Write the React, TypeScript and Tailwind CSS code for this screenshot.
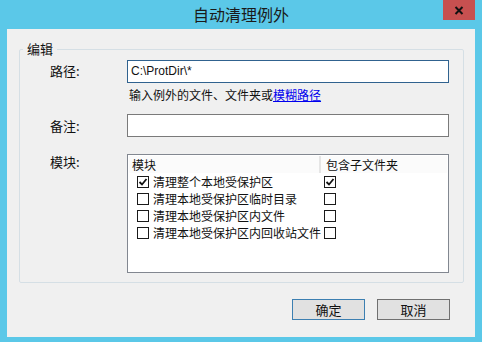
import React from 'react';

const font = { fontFamily: '"Noto Sans CJK SC", "Noto Sans", sans-serif' };

const Check: React.FC<{ on?: boolean }> = ({ on }) => (
  <span className="w-[12px] h-[12px] border border-[#1a1a1a] bg-white flex items-center justify-center shrink-0">
    {on && (
      <svg width="10" height="10" viewBox="0 0 10 10">
        <path d="M1.5 5 L4 7.5 L8.5 2" fill="none" stroke="#111" strokeWidth="1.8" />
      </svg>
    )}
  </span>
);

const rows = [
  { name: '清理整个本地受保护区', on: true, sub: true },
  { name: '清理本地受保护区临时目录', on: false, sub: false },
  { name: '清理本地受保护区内文件', on: false, sub: false },
  { name: '清理本地受保护区内回收站文件', on: false, sub: false },
];

export default function App() {
  return (
    <div className="w-[482px] h-[342px] bg-[#5bc8e8] flex flex-col text-[#111]" style={font}>
      {/* Title bar */}
      <div className="h-[29px] flex items-start">
        <div className="flex-1 text-center text-[16px] leading-[29px] pl-[39px] text-[#1a1a1a]">自动清理例外</div>
        <div className="w-[32px] h-[20px] bg-[#c75050] mr-[7px] flex items-center justify-center">
          <svg width="10" height="9" viewBox="0 0 10 9">
            <path d="M1.5 1 L8.5 8 M8.5 1 L1.5 8" stroke="#111" strokeWidth="2" />
          </svg>
        </div>
      </div>

      {/* Client area */}
      <div className="flex-1 mx-[7px] mb-[5px] bg-[#f0f0f0] flex flex-col pt-[21px] pl-[12px] pr-[11px]">
        {/* Group box */}
        <fieldset className="h-[241px] border border-[#d5dfe5] rounded-[2px] -mt-[8px]">
          <legend className="ml-[3px] px-[4px] text-[13px] leading-[14px]">编辑</legend>

          <div className="pl-[30px] pr-[14px] pt-[4px]">
            <div className="flex items-start">
              <div className="w-[77px] text-[13px] leading-[21px]">路径:</div>
              <div className="flex-1">
                <div className="h-[23px] border border-[#30628f] bg-white text-[12px] leading-[21px] px-[3px]" style={{ fontFamily: '"Liberation Sans", Arial, sans-serif' }}>
                  C:\ProtDir\*
                </div>
                <div className="text-[12px] leading-[16px] mt-[4px] pl-[2px]">
                  输入例外的文件、文件夹或<span className="text-[#0000ee] underline">模糊路径</span>
                </div>
              </div>
            </div>

            <div className="flex items-start mt-[11px]">
              <div className="w-[77px] text-[13px] leading-[23px]">备注:</div>
              <div className="flex-1 h-[23px] border border-[#7a7a7a] bg-white" />
            </div>

            <div className="flex items-start mt-[17px]">
              <div className="w-[77px] text-[13px] leading-[16px]">模块:</div>
              <div className="flex-1 h-[119px] border border-[#828790] bg-white px-[1px] pt-[1px] text-[12px]">
                <div className="flex h-[17px] leading-[17px]">
                  <div className="w-[192px] bg-[#fbfbfb] border-r-2 border-[#e5e5e5] pl-[3px]">模块</div>
                  <div className="flex-1 bg-[#fbfbfb] pl-[5px]">包含子文件夹</div>
                </div>
                {rows.map((r) => (
                  <div key={r.name} className="flex h-[17px] leading-[17px] items-center">
                    <div className="w-[194px] flex items-center pl-[8px] gap-[4px] whitespace-nowrap">
                      <Check on={r.on} />
                      <span>{r.name}</span>
                    </div>
                    <div className="flex-1 flex items-center pl-[1px]">
                      <Check on={r.sub} />
                    </div>
                  </div>
                ))}
              </div>
            </div>
          </div>
        </fieldset>

        {/* Buttons */}
        <div className="flex justify-end gap-[12px] mt-[16px] pr-[14px]">
          <button className="w-[73px] h-[21px] bg-[#e1e1e1] border border-[#3c7fb1] text-[13px] leading-[19px]">确定</button>
          <button className="w-[73px] h-[21px] bg-[#e1e1e1] border border-[#707070] text-[13px] leading-[19px]">取消</button>
        </div>
      </div>
    </div>
  );
}
